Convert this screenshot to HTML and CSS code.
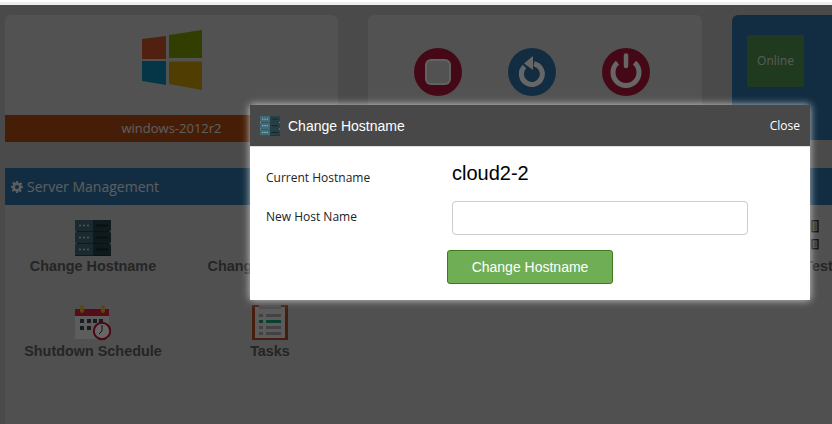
FILE: index.html
```html
<!DOCTYPE html>
<html lang="en">
<head>
    <meta charset="UTF-8">
    <title>Server - windows-2012r2</title>
    <link rel="stylesheet" href="styles.css">
</head>
<body>
    <svg class="defs" width="0" height="0">
        <symbol id="server" viewBox="0 0 36 36">
            <g id="rack">
                <rect x="0" y="0" width="18" height="12" fill="#416a78"/>
                <rect x="18" y="0" width="18" height="12" fill="#264146"/>
                <rect x="0" y="11.4" width="36" height="0.6" fill="#16282c"/>
                <circle cx="5" cy="5.5" r="1.1" fill="#a5e0d0"/>
                <circle cx="9" cy="5.5" r="1.1" fill="#a5e0d0"/>
                <circle cx="13" cy="5.5" r="1.1" fill="#a5e0d0"/>
                <rect x="21" y="4.5" width="12" height="2" fill="#16282c"/>
            </g>
            <use href="#rack" y="12"/>
            <use href="#rack" y="24"/>
            <g fill="#999">
                <rect x="0" y="10.5" width="1.5" height="2"/>
                <rect x="34.5" y="10.5" width="1.5" height="2"/>
                <rect x="0" y="22.5" width="1.5" height="2"/>
                <rect x="34.5" y="22.5" width="1.5" height="2"/>
            </g>
        </symbol>
    </svg>

    <div class="top-strip"></div>

    <div class="page">
        <div class="panels">
            <div class="panel os-panel">
                <svg class="win-logo" width="64" height="64" viewBox="0 0 64 64">
                    <polygon points="2,11 26,8 26,31 2,31" fill="#c8512a"/>
                    <polygon points="29,7 62,2 62,30 29,30" fill="#7e9a06"/>
                    <polygon points="2,33 26,33 26,57 2,53" fill="#0e87b4"/>
                    <polygon points="29,33.5 62,33.5 62,62 29,56" fill="#c59a06"/>
                </svg>
                <div class="os-name">windows-2012r2</div>
            </div>
            <div class="panel power-panel">
                <svg class="power-btn" width="48" height="48" viewBox="0 0 48 48">
                    <circle cx="24" cy="24" r="24" fill="#ab1638"/>
                    <rect x="11" y="11" width="26" height="26" rx="6" fill="#f4f4f4"/>
                    <rect x="13" y="13" width="22" height="22" rx="4" fill="#cdcdcd"/>
                </svg>
                <svg class="power-btn" width="48" height="48" viewBox="0 0 48 48">
                    <circle cx="24" cy="24" r="24" fill="#2f70a5"/>
                    <path d="M26 15.7 A10.5 10.5 0 1 1 16.5 18.5" fill="none" stroke="#fff" stroke-width="5"/>
                    <polygon points="16,15.5 25,8 25,22" fill="#fff"/>
                </svg>
                <svg class="power-btn" width="48" height="48" viewBox="0 0 48 48">
                    <circle cx="24" cy="24" r="24" fill="#ab1638"/>
                    <path d="M15.5 14.6 A13 13 0 1 0 32.5 14.6" fill="none" stroke="#fff" stroke-width="5"/>
                    <line x1="24" y1="7.5" x2="24" y2="18" stroke="#fff" stroke-width="4.5" stroke-linecap="round"/>
                </svg>
            </div>
            <div class="panel status-panel">
                <div class="status-badge">Online</div>
            </div>
        </div>

        <div class="section-bar">
            <svg class="gear" width="12" height="12" viewBox="0 0 24 24">
                <path fill-rule="evenodd" fill="#e8e8e8" d="M10 0h4l.7 3.4 2.2.9 2.9-1.9 2.8 2.8-1.9 2.9.9 2.2L24 10v4l-3.4.7-.9 2.2 1.9 2.9-2.8 2.8-2.9-1.9-2.2.9L14 24h-4l-.7-3.4-2.2-.9-2.9 1.9-2.8-2.8 1.9-2.9-.9-2.2L0 14v-4l3.4-.7.9-2.2-1.9-2.9 2.8-2.8 2.9 1.9 2.2-.9zM12 8a4 4 0 1 0 0 8 4 4 0 0 0 0-8z"/>
            </svg>
            <span>Server Management</span>
        </div>

        <div class="tools">
            <div class="tool">
                <svg width="36" height="36"><use href="#server"/></svg>
                <span>Change Hostname</span>
            </div>
            <div class="tool">
                <svg width="36" height="36"><use href="#server"/></svg>
                <span>Change Password</span>
            </div>
            <div class="tool"></div>
            <div class="tool"></div>
            <div class="tool">
                <svg width="36" height="36" viewBox="0 0 36 36">
                    <rect x="29" y="0.7" width="6" height="11" fill="#b0b0b0" stroke="#222" stroke-width="1.4"/>
                    <rect x="31" y="2.5" width="2.5" height="7.5" fill="#8f7f4a"/>
                    <rect x="29" y="19.7" width="6" height="9" fill="#b0b0b0" stroke="#222" stroke-width="1.4"/>
                    <rect x="31" y="21.5" width="2.5" height="5.5" fill="#808080"/>
                </svg>
                <span>Ping Test</span>
            </div>
            <div class="tool">
                <svg width="36" height="36" viewBox="0 0 36 36">
                    <rect x="0" y="4" width="34" height="30" fill="#e8e8e8"/>
                    <rect x="0" y="4" width="34" height="7" fill="#d8213c"/>
                    <rect x="5" y="0" width="4" height="8" rx="2" fill="#e0b030"/>
                    <rect x="26" y="0" width="4" height="8" rx="2" fill="#e0b030"/>
                    <g fill="#3a4654">
                        <rect x="5" y="14" width="4" height="4"/>
                        <rect x="12" y="14" width="4" height="4"/>
                        <rect x="18" y="14" width="4" height="4"/>
                        <rect x="24" y="14" width="4" height="4"/>
                        <rect x="5" y="21" width="4" height="4"/>
                        <rect x="12" y="21" width="4" height="4"/>
                    </g>
                    <circle cx="27" cy="26" r="8.2" fill="#fff" stroke="#c2102e" stroke-width="2"/>
                    <path d="M27 20v6l-3 3" fill="none" stroke="#333" stroke-width="1"/>
                </svg>
                <span>Shutdown Schedule</span>
            </div>
            <div class="tool">
                <svg width="36" height="36" viewBox="0 0 36 36">
                    <rect x="0" y="0" width="36" height="35" fill="#b04c28"/>
                    <rect x="3" y="2" width="30" height="31" fill="#e4e4e4"/>
                    <rect x="7" y="0" width="22" height="4" fill="#bdbdbd"/>
                    <g fill="#a6a6a6">
                        <rect x="7" y="9" width="4" height="3"/>
                        <rect x="14" y="9" width="15" height="3"/>
                        <rect x="7" y="21" width="4" height="3"/>
                        <rect x="14" y="21" width="15" height="3"/>
                        <rect x="7" y="27" width="4" height="3"/>
                        <rect x="14" y="27" width="15" height="3"/>
                    </g>
                    <rect x="7" y="15" width="4" height="3" fill="#1f9a7a"/>
                    <rect x="14" y="15" width="15" height="3" fill="#1f9a7a"/>
                </svg>
                <span>Tasks</span>
            </div>
        </div>
    </div>

    <div class="overlay"></div>

    <div class="modal">
        <div class="modal-head">
            <svg width="20" height="20"><use href="#server"/></svg>
            <span class="modal-title">Change Hostname</span>
            <span class="modal-close">Close</span>
        </div>
        <div class="modal-body">
            <div class="form-row current-row">
                <label>Current Hostname</label>
                <span class="current-name">cloud2-2</span>
            </div>
            <div class="form-row">
                <label class="new-label" for="new-host">New Host Name</label>
                <input id="new-host" class="host-input" type="text">
            </div>
            <button class="submit-btn">Change Hostname</button>
        </div>
    </div>
</body>
</html>
```

FILE: styles.css
```css
* {
    margin: 0;
    padding: 0;
    box-sizing: border-box;
}

html, body {
    height: 424px;
    overflow: hidden;
}

body {
    background: #fff;
    font-family: "Open Sans", sans-serif;
    padding-top: 2px;
}

.defs {
    position: absolute;
}

.top-strip {
    height: 3px;
    background: #eee;
}

.page {
    background: #b9b9b9;
    height: 419px;
    padding: 10px 0 0 5px;
    overflow: hidden;
}

.panels {
    display: grid;
    grid-template-columns: 333px 334px 334px;
    gap: 30px;
    align-items: start;
    height: 127px;
}

.panel {
    border-radius: 6px;
    background: #cdcdcd;
    overflow: hidden;
}

.os-panel {
    height: 127px;
    display: flex;
    flex-direction: column;
    align-items: center;
    padding-top: 13px;
    border-radius: 6px 6px 0 0;
}

.win-logo {
    margin-bottom: 23px;
}

.os-name {
    width: 100%;
    height: 27px;
    line-height: 27px;
    background: #b04c12;
    color: #e8e8e8;
    font-size: 13px;
    text-align: center;
}

.power-panel {
    height: 127px;
    display: flex;
    padding: 33px 52px 0 46px;
    gap: 46px;
}

.status-panel {
    height: 125px;
    background: #2f70a5;
    padding: 20px 15px;
}

.status-badge {
    width: 57px;
    height: 52px;
    line-height: 52px;
    background: #4e914e;
    border-radius: 2px;
    color: #e0e0e0;
    font-size: 12px;
    text-align: center;
}

.section-bar {
    margin-top: 26px;
    height: 37px;
    background: #2f70a5;
    color: #e8e8e8;
    font-size: 14px;
    display: flex;
    align-items: center;
    gap: 4px;
    padding-left: 6px;
    margin-right: -5px;
}

.tools {
    background: #c8c8c8;
    display: grid;
    grid-template-columns: repeat(5, 177px);
    grid-auto-rows: 85px;
    height: 219px;
    padding-top: 15px;
}

.tool {
    display: flex;
    flex-direction: column;
    align-items: center;
    padding-right: 1px;
    color: #5c5c5c;
    font-family: "Liberation Sans", sans-serif;
    font-size: 14.4px;
    font-weight: bold;
    white-space: nowrap;
}

.tool span {
    margin-top: 2px;
}

.overlay {
    position: absolute;
    top: 5px;
    left: 0;
    width: 832px;
    height: 419px;
    background: rgba(0, 0, 0, 0.6);
}

.modal {
    position: absolute;
    top: 105px;
    left: 250px;
    width: 560px;
    height: 195px;
    background: #fff;
    box-shadow: 0 0 8px rgba(255, 255, 255, 0.75);
}

.modal-head {
    height: 42px;
    background: #484848;
    border-bottom: 1px solid #ddd;
    color: #fff;
    display: flex;
    align-items: center;
    padding: 0 10px;
}

.modal-title {
    margin-left: 8px;
    font-family: "Liberation Sans", sans-serif;
    font-size: 14px;
}

.modal-close {
    margin-left: auto;
    font-size: 12px;
}

.modal-body {
    padding: 14px 16px 0;
}

.form-row {
    display: flex;
    align-items: center;
    font-size: 12px;
    color: #222;
    margin-bottom: 15px;
}

.form-row label {
    width: 186px;
}

.form-row .new-label {
    margin-top: -3px;
}

.current-row {
    height: 27px;
    margin-bottom: 13px;
}

.current-row label {
    margin-top: 5px;
}

.current-name {
    font-family: "Liberation Sans", sans-serif;
    font-size: 20px;
    color: #000;
    margin-top: -3px;
}

.host-input {
    width: 296px;
    height: 34px;
    border: 1px solid #ccc;
    border-radius: 4px;
}

.submit-btn {
    display: block;
    width: 166px;
    height: 34px;
    margin-left: 181px;
    background: #6fae55;
    border: 1px solid #3f7a1f;
    border-radius: 3px;
    color: #fff;
    font-family: "Liberation Sans", sans-serif;
    font-size: 14px;
}
```
